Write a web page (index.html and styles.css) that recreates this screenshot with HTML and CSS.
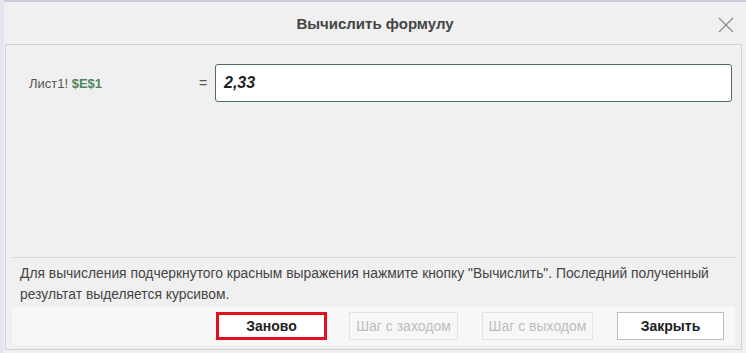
FILE: index.html
```html
<!DOCTYPE html>
<html lang="ru">
<head>
    <meta charset="UTF-8">
    <title>Вычислить формулу</title>
    <link rel="stylesheet" href="styles.css">
</head>
<body>
    <div class="dialog">
        <div class="title-bar">
            <h1 class="title">Вычислить формулу</h1>
            <button class="close" aria-label="Закрыть">
                <svg width="16" height="16" viewBox="0 0 16 16">
                    <path d="M1 1 L15 15 M15 1 L1 15" stroke="#8a8a8a" stroke-width="1.2" fill="none"/>
                </svg>
            </button>
        </div>
        <div class="panel">
            <div class="formula-area">
                <div class="formula-row">
                    <span class="ref">Лист1! <b class="cell">$E$1</b></span>
                    <span class="eq">=</span>
                    <div class="value">2,33</div>
                </div>
            </div>
            <p class="hint">Для вычисления подчеркнутого красным выражения нажмите кнопку "Вычислить". Последний полученный результат выделяется курсивом.</p>
            <div class="buttons">
                <button class="btn btn-active">Заново</button>
                <button class="btn btn-in" disabled>Шаг с заходом</button>
                <button class="btn btn-out" disabled>Шаг с выходом</button>
                <button class="btn btn-close">Закрыть</button>
            </div>
        </div>
    </div>
</body>
</html>
```

FILE: styles.css
```css
html, body {
    margin: 0;
    height: 100%;
}
body {
    background: #e3e6ee;
    font-family: "Liberation Sans", Arial, sans-serif;
    color: #444;
    padding-left: 4px;
    box-sizing: border-box;
}
.dialog {
    background: #f1f0f0;
    border-top: 2px solid #c9cdd8;
    height: 100%;
    box-sizing: border-box;
    display: flex;
    flex-direction: column;
}
.title-bar {
    height: 42px;
    position: relative;
    display: flex;
    align-items: center;
    justify-content: center;
}
.title {
    margin: 0;
    font-size: 15px;
    font-weight: bold;
    color: #444;
}
.close {
    position: absolute;
    right: 12px;
    top: 15px;
    background: none;
    border: none;
    padding: 0;
    width: 16px;
    height: 16px;
}
.panel {
    flex: 1;
    border: 1px solid #d2d2d2;
    margin: 0 4px 3px 1px;
    padding: 0 6px;
    display: flex;
    flex-direction: column;
}
.formula-area {
    height: 213px;
    border-bottom: 1px solid #d6d6d6;
    box-sizing: border-box;
    padding-top: 19px;
}
.formula-row {
    display: flex;
    align-items: center;
    height: 38px;
}
.ref {
    font-size: 13px;
    color: #555;
    width: 170px;
    padding-left: 17px;
}
.cell {
    color: #4c8560;
}
.eq {
    font-size: 14px;
    color: #555;
    width: 16px;
}
.value {
    flex: 1;
    height: 38px;
    box-sizing: border-box;
    border: 1px solid #4d6e5e;
    border-radius: 3px;
    background: #fff;
    font-size: 16px;
    font-weight: bold;
    font-style: italic;
    color: #222;
    display: flex;
    align-items: center;
    padding-left: 8px;
    margin-right: 3px;
}
.hint {
    margin: 0;
    padding: 5px 8px 0;
    height: 44px;
    font-size: 13.85px;
    line-height: 21px;
    color: #444;
}
.buttons {
    background: #f7f7f7;
    height: 38px;
    display: flex;
    align-items: center;
    justify-content: flex-end;
    padding-right: 11px;
}
.btn {
    font-family: "Liberation Sans", Arial, sans-serif;
    font-size: 14px;
    height: 28px;
    background: #f7f7f7;
    border: 1px solid #e3e3e3;
    color: #bdbdbd;
    padding: 0;
}
.btn-active {
    background: #fff;
    border: 3px solid #e0121e;
    color: #222;
    font-weight: bold;
    width: 111px;
}
.btn-in {
    width: 109px;
    margin-left: 22px;
}
.btn-out {
    width: 111px;
    margin-left: 24px;
}
.btn-close {
    background: #fff;
    border: 1px solid #bdbdbd;
    color: #222;
    font-weight: bold;
    width: 107px;
    margin-left: 24px;
}
```
